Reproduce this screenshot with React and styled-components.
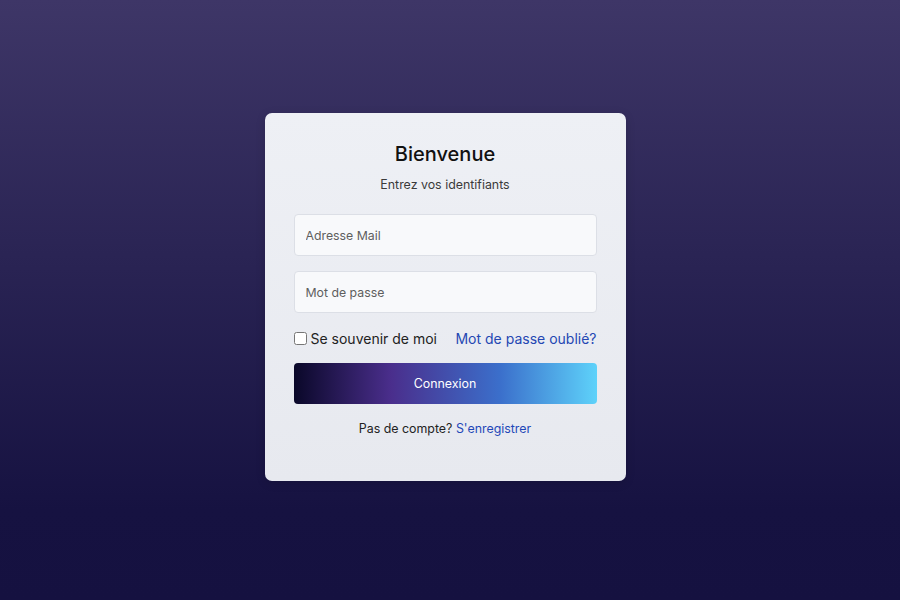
import React, { useState } from 'react';
import styled, { createGlobalStyle } from 'styled-components';

const GlobalStyle = createGlobalStyle`
  * { box-sizing: border-box; }
  html, body, #root { height: 100%; }
  body {
    margin: 0;
    font-family: Inter, "Liberation Sans", Arial, sans-serif;
    background: linear-gradient(to bottom, #3e3667, #161241 85%, #151140);
  }
`;

const Page = styled.div`
  height: 100%;
  display: flex;
  align-items: center;
  justify-content: center;
  padding: 0 10px 6px 0;
`;

const Card = styled.form`
  width: 361px;
  padding: 29px 29px 45px;
  background: linear-gradient(to bottom, #eef0f5, #e7e9ef);
  border-radius: 7px;
  display: flex;
  flex-direction: column;
  box-shadow: 0 2px 10px rgba(0, 0, 0, 0.15);
`;

const Title = styled.h1`
  margin: 0;
  text-align: center;
  font-size: 20px;
  line-height: 24px;
  font-weight: 500;
  color: #111;
`;

const Subtitle = styled.p`
  margin: 11px 0 22px;
  text-align: center;
  font-size: 12.4px;
  color: #3a3a3a;
`;

const Input = styled.input`
  height: 42px;
  padding: 0 11px;
  border: 1px solid #dcdfe6;
  border-radius: 4px;
  background: #f8f9fb;
  font: inherit;
  font-size: 12.3px;
  color: #333;
  margin-bottom: ${(p) => p.$gap}px;
  outline: none;
  &::placeholder { color: #5e5e5e; }
`;

const Row = styled.div`
  display: flex;
  align-items: center;
  justify-content: space-between;
  margin-bottom: 16px;
`;

const Remember = styled.label`
  display: flex;
  align-items: center;
  gap: 4px;
  font-size: 14px;
  color: #222;
  cursor: pointer;
  input {
    margin: 0;
    width: 13px;
    height: 13px;
  }
`;

const Link = styled.a`
  color: ${(p) => (p.$strong ? '#2447b3' : '#1f48b8')};
  text-decoration: none;
  font-size: ${(p) => p.$size}px;
  cursor: pointer;
`;

const Button = styled.button`
  height: 41px;
  border: none;
  border-radius: 4px;
  background: linear-gradient(to right, #0a0829 0%, #4a2e8c 32%, #3b6fcb 68%, #5ed2fa 100%);
  color: #fff;
  font: inherit;
  font-size: 12.4px;
  cursor: pointer;
`;

const Footer = styled.p`
  margin: 17px 0 0;
  text-align: center;
  font-size: 12.4px;
  color: #222;
`;

const App = () => {
  const [remember, setRemember] = useState(false);

  return (
    <>
      <GlobalStyle />
      <Page>
        <Card onSubmit={(e) => e.preventDefault()}>
          <Title>Bienvenue</Title>
          <Subtitle>Entrez vos identifiants</Subtitle>
          <Input type="email" placeholder="Adresse Mail" $gap={15} />
          <Input type="password" placeholder="Mot de passe" $gap={17} />
          <Row>
            <Remember>
              <input type="checkbox" checked={remember} onChange={(e) => setRemember(e.target.checked)} />
              Se souvenir de moi
            </Remember>
            <Link $size={14} $strong>Mot de passe oublié?</Link>
          </Row>
          <Button type="submit">Connexion</Button>
          <Footer>
            Pas de compte? <Link $size={12.4}>S'enregistrer</Link>
          </Footer>
        </Card>
      </Page>
    </>
  );
};

export default App;
